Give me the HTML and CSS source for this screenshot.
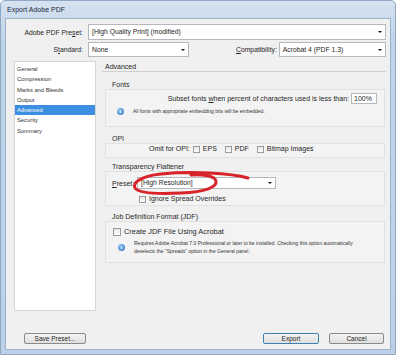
FILE: index.html
```html
<!DOCTYPE html>
<html lang="en">
<head>
  <meta charset="UTF-8" />
  <title>Export Adobe PDF</title>
  <link rel="stylesheet" href="styles.css">
</head>
<body>
  <div class="window">
    <div class="titlebar">Export Adobe PDF</div>

    <div class="client">
      <div class="preset-rows">
        <div class="row">
          <span class="lbl">Adobe PDF Pre<u>s</u>et:</span>
          <div class="select wide">[High Quality Print] (modified)<span class="arrow"></span></div>
        </div>
        <div class="row">
          <span class="lbl">S<u>t</u>andard:</span>
          <div class="select std">None<span class="arrow"></span></div>
          <span class="lbl-compat"><u>C</u>ompatibility:</span>
          <div class="select compat">Acrobat 4 (PDF 1.3)<span class="arrow"></span></div>
        </div>
      </div>

      <div class="main">
        <ul class="nav">
          <li>General</li>
          <li>Compression</li>
          <li>Marks and Bleeds</li>
          <li>Output</li>
          <li class="active">Advanced</li>
          <li>Security</li>
          <li>Summary</li>
        </ul>

        <div class="panel">
          <div class="panel-head">Advanced</div>

          <div class="section">
            <div class="sec-title">Fonts</div>
            <div class="sec-box fonts-box">
              <div class="subset-row">
                <span>Subset fonts <u>w</u>hen percent of characters used is less than:</span>
                <div class="input">100%</div>
              </div>
              <div class="info-row">
                <span class="info-icon">i</span>
                <span class="info-text">All fonts with appropriate embedding bits will be embedded.</span>
              </div>
            </div>
          </div>

          <div class="section">
            <div class="sec-title">OPI</div>
            <div class="sec-box opi-box">
              <span class="omit-lbl">Omit for OPI:</span>
              <label class="check"><span class="box"></span>EPS</label>
              <label class="check"><span class="box"></span>PDF</label>
              <label class="check"><span class="box"></span>Bitmap Images</label>
            </div>
          </div>

          <div class="section">
            <div class="sec-title">Transparency Flattener</div>
            <div class="sec-box flat-box">
              <div class="preset-row">
                <span class="preset-lbl"><u>P</u>reset:</span>
                <div class="select flat">[High Resolution]<span class="arrow"></span></div>
              </div>
              <label class="check ignore"><span class="box"></span>Ignore Spread Overrides</label>
              <svg class="marker" width="125" height="28" viewBox="0 0 125 28">
                <path d="M117,9 C100,4 60,2 30,5 C10,7 1,14 4,19 C8,25 30,25 50,24 C75,23 86,18 85,12 C84,7 72,5 60,6" fill="none" stroke="#d8232a" stroke-width="3" stroke-linecap="round"/>
              </svg>
            </div>
          </div>

          <div class="section">
            <div class="sec-title">Job Definition Format (JDF)</div>
            <div class="sec-box jdf-box">
              <label class="check jdf-check"><span class="box"></span>Create JDF File Using Acrobat</label>
              <div class="info-row jdf-info">
                <span class="info-icon">i</span>
                <span class="info-text">Requires Adobe Acrobat 7.0 Professional or later to be installed. Checking this option automatically<br>deselects the "Spreads" option in the General panel.</span>
              </div>
            </div>
          </div>
        </div>
      </div>

      <div class="footer">
        <button class="btn save">Save Preset...</button>
        <div class="footer-right">
          <button class="btn default">Export</button>
          <button class="btn">Cancel</button>
        </div>
      </div>
    </div>
  </div>
</body>
</html>
```

FILE: styles.css
```css
body {
  margin: 0;
  background: #ffffff;
  font-family: 'Liberation Sans', Arial, sans-serif;
  color: #262626;
}

.window {
  width: 396px;
  height: 355px;
  box-sizing: border-box;
  background: linear-gradient(to bottom, #d4e2f1, #c0d4ea 40px, #bcd1e8);
  border: 1px solid #8ea8c4;
  border-radius: 5px 5px 0 0;
  padding: 0 4px 4px 4px;
  display: flex;
  flex-direction: column;
}

.titlebar {
  height: 17px;
  line-height: 17px;
  font-size: 7px;
  padding-left: 2px;
  color: #1b2838;
}

.client {
  flex: 1;
  background: #f0f0f0;
  border: 1px solid #9bb2cc;
  padding: 5px 3px 0 8px;
  display: flex;
  flex-direction: column;
}

u { text-decoration: underline; }

/* preset rows */
.preset-rows {
  display: flex;
  flex-direction: column;
  gap: 2px;
}

.row {
  display: flex;
  align-items: center;
  font-size: 6.8px;
}

.lbl {
  width: 69px;
  text-align: right;
  padding-right: 5px;
}

.lbl-compat {
  margin-left: 47px;
  margin-right: 2px;
}

.select {
  position: relative;
  box-sizing: border-box;
  height: 16px;
  line-height: 14px;
  background: #ffffff;
  border: 1px solid #b5b8bd;
  padding-left: 3px;
  font-size: 6.8px;
}

.select.wide { width: 298px; }
.select.std { width: 101px; height: 15px; line-height: 13px; }
.select.compat { width: 107px; height: 15px; line-height: 13px; }

.arrow {
  position: absolute;
  right: 3px;
  top: 50%;
  margin-top: -1px;
  border-left: 2px solid transparent;
  border-right: 2px solid transparent;
  border-top: 2px solid #111;
}

/* main area */
.main {
  display: flex;
  margin-top: 4px;
  height: 250px;
}

.nav {
  list-style: none;
  margin: 0;
  padding: 2px 0 0 0;
  width: 82px;
  box-sizing: border-box;
  background: #ffffff;
  border: 1px solid #d6d6d6;
  font-size: 5.8px;
}

.nav li {
  height: 10.3px;
  line-height: 10.3px;
  padding-left: 2px;
  color: #333;
}

.nav li.active {
  background: #3c8fe0;
  color: #ffffff;
}

.panel {
  margin-left: 5px;
  width: 286px;
  font-size: 7px;
}

.panel-head {
  height: 9px;
  line-height: 9px;
  padding-left: 3px;
  margin: 1px 1px 0 1px;
  border-bottom: 1px solid #cfcfcf;
}

.section {
  margin-left: 4px;
  width: 280px;
}

.sec-title {
  height: 9px;
  line-height: 9px;
  padding-left: 7px;
  color: #2a2a2a;
}

.sec-box {
  box-sizing: border-box;
  border: 1px solid #e2e2e2;
  background: #f3f3f3;
  position: relative;
}

.fonts-box {
  height: 38px;
  padding-top: 3px;
}

.section:nth-child(2) { margin-top: 8px; }
.section:nth-child(3) { margin-top: 7px; }
.section:nth-child(4) { margin-top: 4px; }
.section:nth-child(5) { margin-top: 6px; }

.subset-row {
  display: flex;
  justify-content: flex-end;
  align-items: center;
  padding-right: 7px;
  gap: 2px;
}

.input {
  width: 26px;
  height: 11px;
  box-sizing: border-box;
  border: 1px solid #b5b8bd;
  background: #fff;
  padding-left: 2px;
  line-height: 9px;
}

.info-row {
  display: flex;
  align-items: center;
  padding-left: 11px;
  margin-top: 3px;
}

.info-icon {
  width: 7px;
  height: 7px;
  border-radius: 50%;
  background: radial-gradient(circle at 35% 35%, #8fc4f0, #2a73c2);
  color: #fff;
  font-size: 5px;
  line-height: 7px;
  text-align: center;
  font-weight: bold;
  font-family: 'Liberation Serif', serif;
  margin-right: 9px;
  flex: none;
}

.info-text {
  font-size: 5px;
  line-height: 8px;
  color: #333;
}

.opi-box {
  height: 15px;
  display: flex;
  align-items: flex-start;
  padding-top: 1px;
  padding-left: 43px;
}

.omit-lbl {
  margin-right: 3px;
  line-height: 8px;
}

.check {
  display: flex;
  align-items: center;
  line-height: 8px;
  margin-right: 8px;
}

.check .box {
  width: 5px;
  height: 5px;
  border: 1px solid #9a9a9a;
  background: linear-gradient(to bottom, #e6e6e6, #ffffff);
  margin-right: 3px;
  flex: none;
}

.flat-box {
  height: 35px;
  padding-top: 5px;
  padding-left: 6px;
}

.preset-row {
  display: flex;
  align-items: center;
}

.preset-lbl {
  width: 25px;
}

.select.flat {
  width: 139px;
  height: 12px;
  line-height: 10px;
}

.ignore {
  margin-top: 6px;
  margin-left: 27px;
}

.marker {
  position: absolute;
  left: 25px;
  top: -3px;
}

.jdf-box {
  height: 42px;
  padding-top: 6px;
  padding-left: 7px;
}

.jdf-check {
  font-size: 7.4px;
}

.jdf-check .box {
  width: 6px;
  height: 6px;
}

.jdf-info {
  padding-left: 5px;
  margin-top: 3px;
}

/* footer */
.footer {
  display: flex;
  justify-content: space-between;
  align-items: center;
  margin-top: 22px;
  padding-left: 10px;
  padding-right: 3px;
}

.footer-right {
  display: flex;
  gap: 10px;
}

.btn {
  height: 11px;
  box-sizing: border-box;
  padding: 0;
  font-family: 'Liberation Sans', Arial, sans-serif;
  font-size: 6.5px;
  line-height: 9px;
  color: #1f1f1f;
  background: linear-gradient(to bottom, #f4f4f4, #dedede);
  border: 1px solid #8a8a8a;
  border-radius: 2px;
  width: 55px;
}

.btn.save { width: 62px; }

.btn.default {
  border-color: #3c7fb1;
  width: 56px;
}
```
